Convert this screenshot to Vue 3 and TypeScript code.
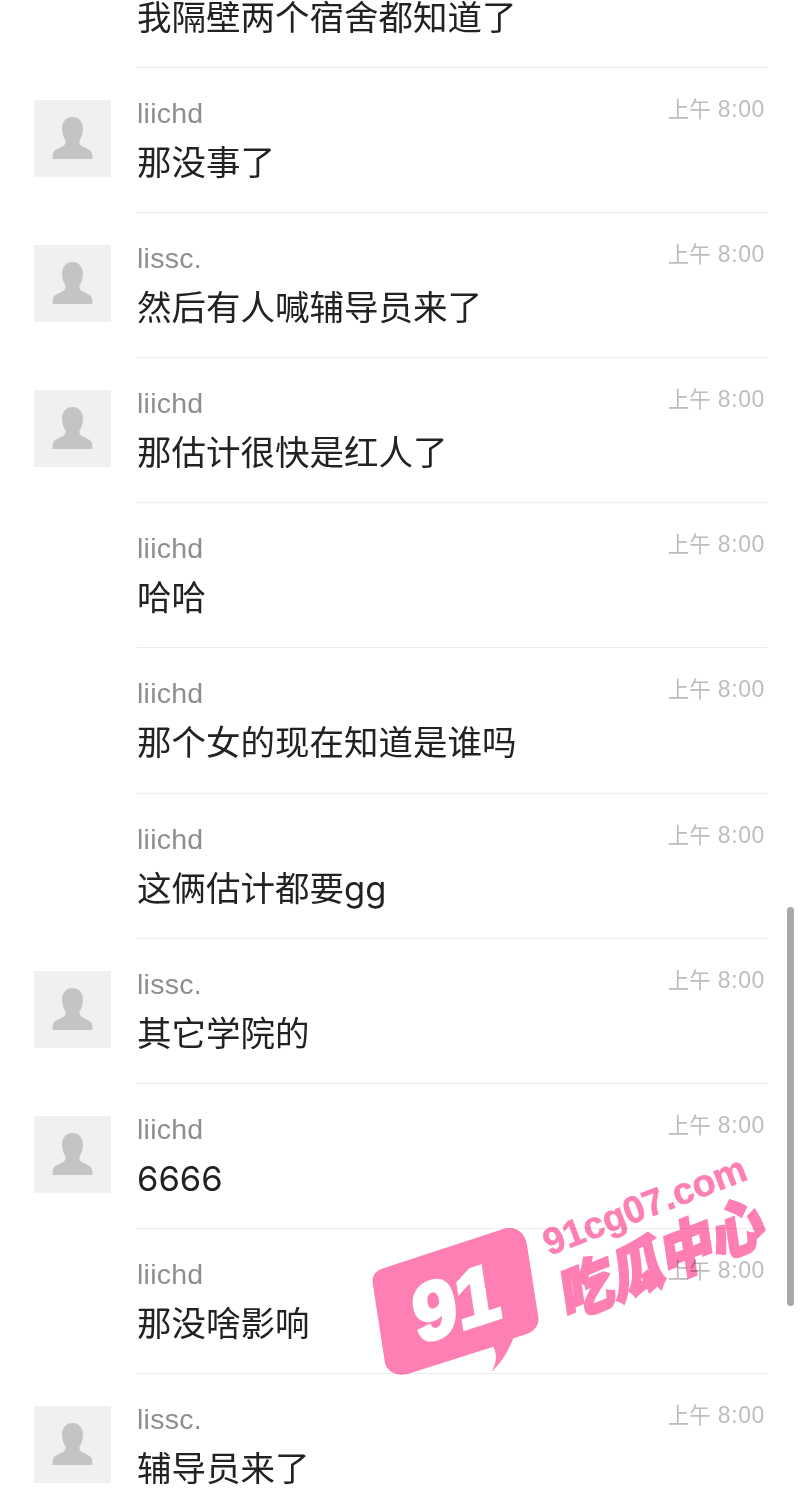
<script setup lang="ts">
interface Row { name: string; text: string; avatar: boolean }
const a = 'liichd', b = 'lissc.'
const rows: Row[] = [
  { name: a, text: '我隔壁两个宿舍都知道了', avatar: false },
  { name: a, text: '那没事了', avatar: true },
  { name: b, text: '然后有人喊辅导员来了', avatar: true },
  { name: a, text: '那估计很快是红人了', avatar: true },
  { name: a, text: '哈哈', avatar: false },
  { name: a, text: '那个女的现在知道是谁吗', avatar: false },
  { name: a, text: '这俩估计都要gg', avatar: false },
  { name: b, text: '其它学院的', avatar: true },
  { name: a, text: '6666', avatar: true },
  { name: a, text: '那没啥影响', avatar: false },
  { name: b, text: '辅导员来了', avatar: true },
]
</script>

<template>
  <div class="page">
    <div class="list">
      <div v-for="(r, i) in rows" :key="i" class="row">
        <div class="side">
          <div v-if="r.avatar" class="avatar">
            <svg width="77" height="77" viewBox="0 0 77 77">
              <path class="person" d="M38.500 17C32.500 17 28 21.800 28 28.500C28 33.500 29.600 37.800 31.500 40.500C32 43 31 45 28.800 46.200C25.500 48 21.500 49 19.800 51.500C18.800 53.200 18.500 56 18.600 59L58.400 59C58.500 56 58.200 53.200 57.200 51.500C55.500 49 51.500 48 48.200 46.200C46 45 45 43 45.500 40.500C47.400 37.800 49 33.500 49 28.500C49 21.800 44.500 17 38.500 17Z" />
            </svg>
          </div>
        </div>
        <div class="main">
          <div class="head">
            <span class="name">{{ r.name }}</span>
            <span class="time"><span class="ampm">上午</span> 8:00</span>
          </div>
          <div class="msg">{{ r.text }}</div>
        </div>
      </div>
    </div>

    <div class="scrollbar"></div>

    <svg class="mark" width="440" height="260" viewBox="360 1130 440 260">
      <path class="pink" d="M372.700 1283.300C371.500 1276 376 1270.500 383.300 1268.300L503.300 1229C515 1225.500 524.500 1232 526.700 1243.300L538.300 1316.700C539.500 1325 534.500 1331.500 526.700 1334L513.300 1338.300C508 1352 501 1363 491.700 1371.700C496.500 1363 497.500 1355 493.300 1346.700L410 1373.300C397.500 1377.500 387.500 1372 385 1363.300Z" />
      <text class="n91" transform="matrix(0.951 -0.309 0.153 0.988 418 1344)">91</text>
      <text class="url" transform="translate(549 1256) rotate(-21)">91cg07.com</text>
      <text class="cn" transform="matrix(0.930 -0.368 0.170 1.120 566 1320)">吃瓜中心</text>
    </svg>
  </div>
</template>

<style>
html, body { margin: 0; background: #fff; }
</style>

<style scoped>
.page {
  position: relative;
  width: 800px;
  height: 1497px;
  overflow: hidden;
  background: #fff;
  font-family: "Liberation Sans", "Noto Sans CJK SC", sans-serif;
  filter: blur(0.35px);
}
.list { margin-top: -77px; }
.row {
  display: flex;
  height: 145.1px;
  padding-right: 33px;
  box-sizing: border-box;
}
.side { width: 137px; flex: none; padding: 32px 0 0 34px; box-sizing: border-box; }
.avatar { width: 77px; height: 77px; background: #f0f0f0; }
.avatar svg { display: block; }
.person { fill: #c4c4c4; }
.main {
  flex: 1;
  padding-top: 26px;
  box-sizing: border-box;
  border-bottom: 1px solid #ececec;
}
.head { display: flex; justify-content: space-between; align-items: flex-start; }
.name {
  padding-top: 4px;
  font-size: 28.500px;
  line-height: 30px;
  letter-spacing: 0.25px;
  color: #8e8e8e;
}
.time {
  padding-right: 2px;
  font-size: 23px;
  line-height: 30px;
  color: #bdbdbd;
  letter-spacing: 0.6px;
}
.ampm { font-size: 21.500px; letter-spacing: 0; }
.msg {
  margin-top: 15px;
  font-family: Inter, "Noto Sans CJK SC", sans-serif;
  font-size: 34.500px;
  line-height: 40px;
  color: #222;
}
.scrollbar {
  position: absolute;
  left: 787px;
  top: 907px;
  width: 7px;
  height: 399px;
  border-radius: 3.500px;
  background: #a8a8a8;
}
.mark { position: absolute; left: 360px; top: 1130px; mix-blend-mode: multiply; }
.pink { fill: #fd7fb3; }
.n91 {
  font-family: "Liberation Sans", sans-serif;
  font-weight: 700;
  font-size: 80px;
  fill: #fff;
  stroke: #fff;
  stroke-width: 4px;
}
.url {
  font-family: "Liberation Sans", sans-serif;
  font-weight: 700;
  font-size: 37.500px;
  fill: #fd7fb3;
  stroke: #fd7fb3;
  stroke-width: 0.600px;
}
.cn {
  font-family: "Noto Sans CJK SC", sans-serif;
  font-weight: 900;
  font-size: 54px;
  fill: #fd7fb3;
  stroke: #fd7fb3;
  stroke-width: 2.500px;
}
</style>
